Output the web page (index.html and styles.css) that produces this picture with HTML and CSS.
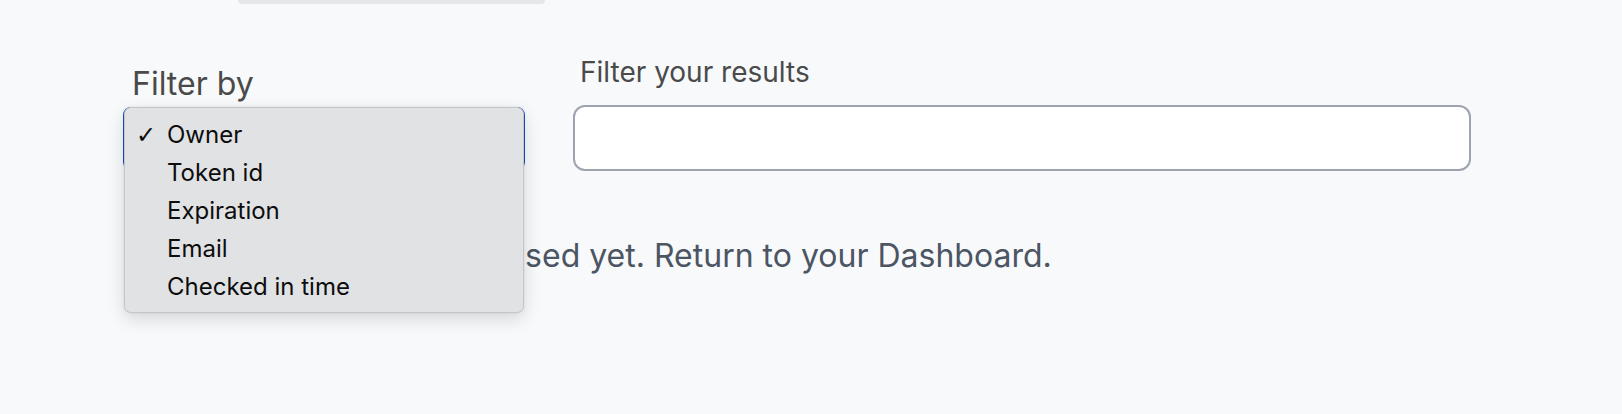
FILE: index.html
```html
<!DOCTYPE html>
<html lang="en">
<head>
<meta charset="utf-8">
<title>Filter</title>
<link rel="stylesheet" href="styles.css">
</head>
<body>
<div class="topbar"></div>
<main class="content">
  <div class="filters">
    <div class="field field-select">
      <label class="label-lg">Filter by</label>
      <div class="select"></div>
    </div>
    <div class="field field-input">
      <label class="label-sm">Filter your results</label>
      <div class="input"></div>
    </div>
  </div>
  <p class="empty">No tokens have been used yet. Return to your Dashboard.</p>
  <ul class="menu">
    <li class="item checked"><span class="check">✓</span>Owner</li>
    <li class="item">Token id</li>
    <li class="item">Expiration</li>
    <li class="item">Email</li>
    <li class="item">Checked in time</li>
  </ul>
</main>
</body>
</html>
```
FILE: styles.css
```css
html, body {
  margin: 0;
  padding: 0;
}
body {
  background: #f8f9fa;
  font-family: "Inter", "Noto Sans", sans-serif;
  width: 1622px;
  height: 414px;
  overflow: hidden;
}
.topbar {
  margin-left: 238px;
  width: 307px;
  height: 4px;
  background: #e5e7eb;
  border-radius: 0 0 6px 6px;
}
.content {
  position: relative;
  padding-top: 51px;
}
.filters {
  display: flex;
  align-items: flex-start;
  margin-left: 123px;
  gap: 48px;
}
.field {
  display: flex;
  flex-direction: column;
}
.field-select {
  width: 402px;
}
.field-input {
  width: 898px;
}
.label-lg {
  margin-top: 10px;
  margin-left: 9px;
  font-size: 32px;
  line-height: 38px;
  color: #4a4a4a;
}
.label-sm {
  margin-left: 7px;
  font-size: 28px;
  line-height: 34px;
  color: #4a4a4a;
}
.select {
  margin-top: 4px;
  height: 59px;
  border: 2px solid #1e4fd0;
  border-radius: 8px;
  background: #e2e3e5;
}
.input {
  margin-top: 16px;
  height: 62px;
  border: 2px solid #9ea3b0;
  border-radius: 12px;
  background: #ffffff;
}
.menu {
  position: absolute;
  z-index: 10;
  left: 124px;
  top: 103px;
  width: 400px;
  height: 206px;
  margin: 0;
  padding: 8px 0 0 0;
  list-style: none;
  background: #e1e2e4;
  border: 1px solid #c4c5c9;
  border-radius: 7px;
  box-shadow: 0 6px 18px rgba(0, 0, 0, 0.14), 0 0 3px rgba(0, 0, 0, 0.08);
  box-sizing: border-box;
}
.item {
  position: relative;
  padding-left: 42px;
  font-size: 24px;
  line-height: 38px;
  color: #0d0d0d;
}
.check {
  position: absolute;
  left: 11px;
  font-size: 24px;
  font-family: "DejaVu Sans", sans-serif;
}
.empty {
  margin: 66px 0 0 0;
  padding-left: 178px;
  font-size: 32px;
  line-height: 38px;
  color: #4b5563;
}
```
